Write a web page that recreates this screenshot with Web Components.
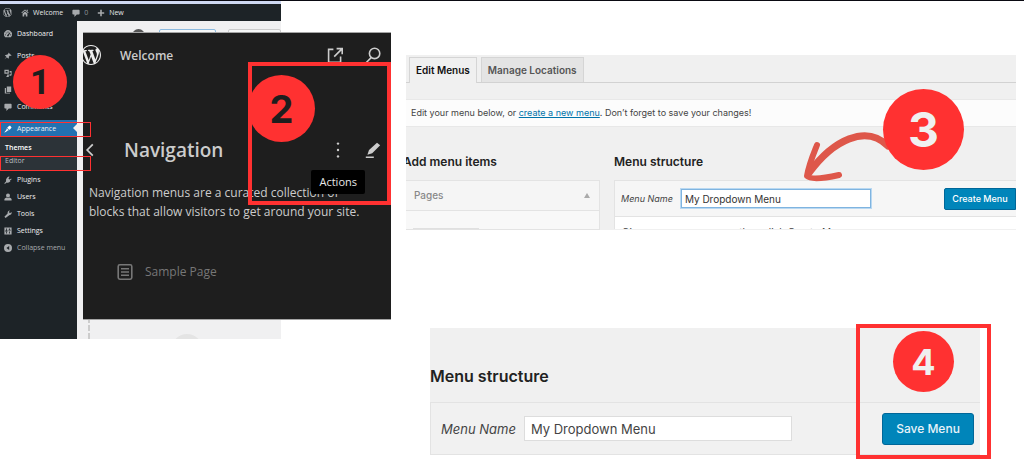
<!DOCTYPE html>
<html lang="en">
<head>
<meta charset="utf-8">
<title>Creating a dropdown menu</title>
<style>
  body { margin: 0; background: #fff; font-family: Inter, "Liberation Sans", sans-serif; }
</style>
</head>
<body>
<menu-guide></menu-guide>

<script>
const define = (name, html) => customElements.define(name, class extends HTMLElement {
  constructor() {
    super();
    const t = document.createElement('template');
    t.innerHTML = html;
    this.attachShadow({ mode: 'open' }).append(t.content.cloneNode(true));
  }
});

const ICONS = {
  wordpress: '<path d="M20 10c0-5.51-4.49-10-10-10C4.48 0 0 4.49 0 10c0 5.52 4.48 10 10 10 5.51 0 10-4.48 10-10zM7.78 15.37L4.37 6.22c.55-.02 1.17-.08 1.17-.08.5-.06.44-1.13-.06-1.11 0 0-1.45.11-2.37.11-.18 0-.37 0-.58-.01C4.12 2.69 6.87 1.11 10 1.11c2.33 0 4.45.87 6.05 2.34-.68-.11-1.65.39-1.65 1.58 0 .74.45 1.36.9 2.1.35.61.55 1.36.55 2.46 0 1.49-1.4 5-1.4 5l-3.03-8.37c.54-.02.82-.17.82-.17.5-.05.44-1.25-.06-1.22 0 0-1.44.12-2.38.12-.87 0-2.33-.12-2.33-.12-.5-.03-.56 1.2-.06 1.22l.92.08 1.26 3.41zM17.41 10c.24-.64.74-1.87.43-4.25.7 1.29 1.05 2.71 1.05 4.25 0 3.29-1.73 6.24-4.4 7.78.97-2.59 1.94-5.2 2.92-7.78zM6.1 18.09C3.12 16.65 1.11 13.53 1.11 10c0-1.3.23-2.48.72-3.59C3.25 10.3 4.67 14.2 6.1 18.09zm4.03-6.63l2.58 6.98c-.86.29-1.76.45-2.71.45-.79 0-1.57-.11-2.29-.33.81-2.38 1.62-4.74 2.42-7.1z"/>',
  home: '<path d="M10 1l9 8-1.500 1.500L10 4 2.500 10.500 1 9zM14 2h3v4l-3-2zM10 6l6 5v8h-4v-5H8v5H4v-8z"/>',
  comment: '<path d="M3 2h14q2 0 2 2v8q0 2-2 2h-5l-6 6v-6H3q-2 0-2-2V4q0-2 2-2z"/>',
  plus: '<path d="M8 2h4v6h6v4h-6v6H8v-6H2V8h6z"/>',
  dashboard: '<path fill-rule="evenodd" d="M3 18a10 10 0 1 1 14 0zM9 4h2v3H9zM4 7l2-1 1 2-2 1zM14 6l2 1-2 3-2 4a2 2 0 1 1-3-2zM2 11h3v2H2zM15 11h3v2h-3z"/>',
  pin: '<path d="M11 1l8 8-2 1-2-1-3 3q1 3-1 5l-4-4-6 6 5-7-4-4q3-2 6-1l3-3z"/>',
  media: '<path fill-rule="evenodd" d="M1 2h11v10H1zM4 5v4h5V5zM14 5h5v10a3 2 0 1 1-2-2V9h-3zM8 14h4v5a3 2 0 1 1-4-2z"/>',
  pages: '<path d="M7 1h11v14H7zM2 5h3v12h10v2H2z"/>',
  brush: '<path d="M11 4l4-3 4 5-4 5-2 1-5-5zM7 8l5 5-3 1-1 1-6 4-1-1 5-6z"/>',
  plug: '<path d="M12 1l2 1-3 4 3 3 4-3 1 2-4 3 1 2q-4 5-9 3l-5 4-1-2 4-4Q4 8 8 4z"/>',
  user: '<circle cx="10" cy="6" r="5"/><path d="M1 19v-4q2-4 6-4l3 2 3-2q4 0 6 4v4z"/>',
  wrench: '<path d="M15 1l-3 4 3 3 4-3q1 7-6 8l-9 7-3-3 8-8q-1-7 6-8z"/>',
  settings: '<path fill-rule="evenodd" d="M1 1h18v18H1zM5 4v5H3v2h6V9H7V4zM5 12v4h2v-4zM13 4v3h-2v2h6V7h-2V4zM13 11v5h2v-5z"/>',
  collapse: '<path fill-rule="evenodd" d="M10 0a10 10 0 1 0 0 20 10 10 0 0 0 0-20zM13 5v10l-7-5z"/>',
  external: '<path fill="none" stroke="currentColor" stroke-width="2" d="M8 3H2v16h15v-7M12 2h7v7M19 2L9 12"/>',
  search: '<g fill="none" stroke="currentColor" stroke-width="2"><circle cx="12" cy="8" r="6.500"/><path d="M8 13l-7 7"/></g>',
  back: '<path fill="none" stroke="currentColor" stroke-width="2.500" d="M14 2L6 10l8 8"/>',
  more: '<circle cx="10" cy="2" r="1.500"/><circle cx="10" cy="10" r="1.500"/><circle cx="10" cy="18" r="1.500"/>',
  edit: '<path d="M15 1l4 3L9 14l-6 2 2-6zM1 18h10v2H1z"/>',
  page: '<g fill="none" stroke="currentColor" stroke-width="2"><rect x="1.500" y="1" width="17" height="18" rx="2"/><path d="M5 6h10M5 10h10M5 14h10"/></g>'
};
customElements.define('ui-icon', class extends HTMLElement {
  connectedCallback() {
    if (this.shadowRoot) return;
    this.attachShadow({ mode: 'open' }).innerHTML =
      `<style>:host{display:block;flex:none;width:var(--icon-size,8px);height:var(--icon-size,8px)}
       svg{display:block;width:100%;height:100%;fill:currentColor}</style>
       <svg viewBox="0 0 20 20" aria-hidden="true">${ICONS[this.getAttribute('name')]}</svg>`;
  }
});

define('step-badge', `
<style>
  :host { display: grid; place-items: center; width: var(--badge-size); height: var(--badge-size);
    border-radius: 50%; background: #ff3131; color: #f0f0f0; font-weight: 700; line-height: 1; }
</style><slot></slot>`);

define('mark-frame', `
<style>:host { display: block; box-sizing: border-box; border: 4px solid #ff3131; pointer-events: none; }</style>`);

define('admin-bar', `
<style>
  :host { display: block; border-top: 3px solid #cfd9f3; background: #1d2327; color: #e4e6e7; font: 7px "Open Sans", sans-serif; }
  nav { display: flex; align-items: center; height: 17px; padding-left: 3px; }
  a { display: flex; align-items: center; gap: 4px; color: inherit; text-decoration: none; }
  a + a { margin-left: 9px; }
  .dim { color: #8d9499; }
  ui-icon { color: #a7aaad; }
</style>
<nav aria-label="Toolbar">
  <a href="#" aria-label="WordPress"><ui-icon name="wordpress" style="--icon-size:9px"></ui-icon></a>
  <a href="#"><ui-icon name="home"></ui-icon>Welcome</a>
  <a href="#" class="dim"><ui-icon name="comment"></ui-icon>0</a>
  <a href="#"><ui-icon name="plus"></ui-icon>New</a>
</nav>`);

define('side-item', `
<style>
  :host { display: block; color: #f0f0f1; }
  a { display: flex; align-items: center; gap: 5px; height: 17px; padding-left: 4px; color: inherit; text-decoration: none; white-space: nowrap; }
  ::slotted(ui-icon) { color: #a7aaad; }
  :host([current]) { background: #2271b1; position: relative; }
  :host([current]) ::slotted(ui-icon) { color: #fff; }
  :host([current])::after { content: ""; position: absolute; right: 0; top: 4px; border: 4px solid transparent; border-right-color: #f0f0f1; border-left: 0; }
  :host([dim]) { color: #a7aaad; }
</style>
<a href="#"><slot name="icon"></slot><slot></slot></a>`);

define('side-menu', `
<style>
  :host { display: block; box-sizing: border-box; width: 77px; background: #1d2327; padding-top: 4px; font: 7px "Open Sans", sans-serif; }
  .group { margin-bottom: 5px; }
  .sub { display: grid; align-content: center; gap: 4px; height: 34px; padding-left: 5px; background: #2c3338; }
  .sub a { color: #b9bdc0; text-decoration: none; line-height: 9px; }
  .sub a.on { color: #fff; font-weight: 600; }
</style>
<nav aria-label="Admin menu">
  <div class="group"><side-item><ui-icon slot="icon" name="dashboard"></ui-icon>Dashboard</side-item></div>
  <div class="group">
    <side-item><ui-icon slot="icon" name="pin"></ui-icon>Posts</side-item>
    <side-item><ui-icon slot="icon" name="media"></ui-icon>Media</side-item>
    <side-item><ui-icon slot="icon" name="pages"></ui-icon>Pages</side-item>
    <side-item><ui-icon slot="icon" name="comment"></ui-icon>Comments</side-item>
  </div>
  <side-item current><ui-icon slot="icon" name="brush"></ui-icon>Appearance</side-item>
  <div class="sub"><a href="#" class="on">Themes</a><a href="#">Editor</a></div>
  <side-item><ui-icon slot="icon" name="plug"></ui-icon>Plugins</side-item>
  <side-item><ui-icon slot="icon" name="user"></ui-icon>Users</side-item>
  <side-item><ui-icon slot="icon" name="wrench"></ui-icon>Tools</side-item>
  <side-item><ui-icon slot="icon" name="settings"></ui-icon>Settings</side-item>
  <side-item dim><ui-icon slot="icon" name="collapse"></ui-icon>Collapse menu</side-item>
</nav>`);

define('admin-window', `
<style>
  :host { display: block; width: 281px; }
  .cols { display: flex; height: 318px; background: #f0f0f1; }
  .canvas { flex: 1; display: flex; flex-direction: column; justify-content: space-between; overflow: hidden; padding-left: 11px; }
  .tools { display: flex; gap: 12px; padding: 8px 0 0 44px; }
  .tools i { box-sizing: border-box; width: 57px; height: 14px; border: 1px solid #8dbbe0; border-radius: 2px; background: #f6f7f7; }
  .tools i:first-child { width: 13px; height: 13px; border: 0; border-radius: 50%; background: #555; margin-right: 2px; }
  .tools i:last-child { border-color: #ccc; flex: 1; }
  .drop { height: 22px; border-left: 2px dashed #ccc; overflow: hidden; }
  .drop::before { content: ""; display: block; width: 32px; height: 32px; margin: 17px 0 0 81px; border-radius: 50%; background: #e4e4e4; }
</style>
<admin-bar></admin-bar>
<div class="cols"><side-menu></side-menu>
  <div class="canvas"><div class="tools"><i></i><i></i><i></i></div><div class="drop"></div></div>
</div>`);

define('nav-card', `
<style>
  :host { display: block; box-sizing: border-box; background: #1e1e1e; color: #ccc; border: solid #a5a5a5; border-width: 1px 0; overflow: hidden; font: 12px "Open Sans", sans-serif; --icon-size: 16px; }
  header, .title { display: flex; align-items: center; }
  header { height: 44px; padding-right: 10px; font-weight: 600; }
  .site { margin: 0 auto 0 19px; }
  button { display: block; padding: 0; border: 0; background: none; color: inherit; }
  header button + button { margin-left: 22px; }
  header > ui-icon { --icon-size: 20px; margin-left: -2px; color: #eee; }
  .title { height: 34px; margin-top: 56px; padding: 0 10px 0 0; }
  .title .back { --icon-size: 14px; }
  h2 { margin: 0 auto 0 27px; font-size: 19px; font-weight: 600; }
  .title button + button { margin-left: 19px; }
  p { margin: 16px 0 0 6px; line-height: 19px; white-space: nowrap; }
  .item { display: flex; align-items: center; gap: 12px; margin: 41px 0 0 34px; line-height: 20px; color: #777; text-decoration: none; }
</style>
<header><ui-icon name="wordpress"></ui-icon><span class="site">Welcome</span>
  <button aria-label="View site"><ui-icon name="external"></ui-icon></button>
  <button aria-label="Search"><ui-icon name="search"></ui-icon></button></header>
<div class="title"><button class="back" aria-label="Back"><ui-icon name="back"></ui-icon></button><h2>Navigation</h2>
  <button aria-label="Actions menu"><ui-icon name="more"></ui-icon></button>
  <button aria-label="Edit"><ui-icon name="edit"></ui-icon></button></div>
<p>Navigation menus are a curated collection of<br>blocks that allow visitors to get around your site.</p>
<a href="#" class="item"><ui-icon name="page"></ui-icon>Sample Page</a>`);

define('tool-tip', `
<style>:host { display: block; padding: 0 8px; border-radius: 2px; background: #000; color: #e8e8e8; font: 11px/24px "Open Sans", sans-serif; }</style><slot></slot>`);

define('site-editor-scene', `
<style>
  :host { display: block; position: relative; }
  nav-card, mark-frame, step-badge, tool-tip { position: absolute; }
  nav-card { left: 83px; right: 0; top: 31px; height: 288px; }
  .thin { left: 0; width: 91px; height: 15px; border-width: 1px; }
  .appearance { top: 121px; }
  .editor { top: 155px; }
  .actions { right: 0; top: 61px; width: 143px; height: 143px; }
  step-badge { color: #1e1e1e; }
  .one { left: 13px; top: 54px; --badge-size: 54px; font: 700 35px/1 Roboto, sans-serif; }
  .two { left: 248px; top: 74px; --badge-size: 67px; font-size: 38px; }
  tool-tip { right: 26px; top: 169px; }
</style>
<admin-window></admin-window>
<nav-card></nav-card>
<mark-frame class="thin appearance"></mark-frame>
<mark-frame class="thin editor"></mark-frame>
<mark-frame class="actions"></mark-frame>
<step-badge class="one">1</step-badge>
<step-badge class="two">2</step-badge>
<tool-tip>Actions</tool-tip>`);

define('menus-screen', `
<style>
  :host { display: block; position: relative; background: #f0f0f0; color: #444; font-size: 10px; overflow: hidden; }
  .tabs { display: flex; gap: 4px; padding: 2px 3px 0; border-bottom: 1px solid #d2d2d2; }
  .tabs a { padding: 0 6px; border: 1px solid #d5d5d5; border-bottom: 0; background: #e4e4e4; color: #555; font-weight: 600; line-height: 24px; text-decoration: none; }
  .tabs a.on { margin-bottom: -1px; padding-bottom: 1px; background: #f0f0f0; color: #111; }
  .notice { margin: 16px 0 0; padding-left: 5px; background: #fcfcfc; border: solid #e8e8e8; border-width: 1px 0; font-size: 9px; line-height: 26px; }
  .notice a { color: #0073aa; }
  .cols { display: grid; grid-template-columns: 194px 1fr; column-gap: 14px; }
  h2 { margin: 26px 0 10px; color: #222; font-size: 12px; font-weight: 600; line-height: 17px; }
  .add h2 { margin-left: -3px; }
  .box { border: 1px solid #e3e3e3; background: #f8f8f8; overflow: hidden; }
  .add .box { border-left: 0; }
  .pages { display: flex; align-items: center; justify-content: space-between; padding: 0 9px 0 8px; border-bottom: 1px solid #e3e3e3; color: #888; font-weight: 500; line-height: 29px; background: #f5f5f5; }
  .pages::after { content: ""; border: 3px solid transparent; border-bottom: 5px solid #aaa; border-top: 0; }
  .stub { width: 66px; height: 1px; margin: 17px 0 0 7px; background: #e0e0e0; }
  .structure .box { border-width: 1px 0 0 1px; }
  form { display: flex; align-items: center; height: 35px; padding-left: 6px; border-bottom: 1px solid #e3e3e3; background: #f6f6f6; }
  label { font-size: 9px; font-style: italic; margin-right: 8px; }
  input { box-sizing: border-box; width: 190px; height: 19px; padding: 0 3px; border: 1px solid #7fb4e0; outline: 1px solid #b9d8f1; background: #fff; color: #333; font: inherit; }
  button { margin-left: auto; width: 72px; height: 22px; padding: 0; border: 1px solid #006799; border-radius: 2px 0 0 2px; background: #0085ba; color: #fff; font: 500 9px Inter, sans-serif; }
  .hint { height: 12px; padding: 9px 7px 0; box-sizing: border-box; line-height: 12px; background: #fff; overflow: hidden; }
  step-badge { position: absolute; right: 52px; top: 34px; --badge-size: 81px; font-size: 48px; }
  .arrow { position: absolute; right: 121px; top: 75px; width: 95px; height: 55px; }
</style>
<nav class="tabs"><a href="#" class="on">Edit Menus</a><a href="#">Manage Locations</a></nav>
<p class="notice">Edit your menu below, or <a href="#">create a new menu</a>. Don’t forget to save your changes!</p>
<div class="cols">
  <section class="add"><h2>Add menu items</h2><div class="box"><div class="pages">Pages</div><div class="stub"></div></div></section>
  <section class="structure"><h2>Menu structure</h2><div class="box">
    <form><label for="name">Menu Name</label><input id="name" value="My Dropdown Menu"><button type="button">Create Menu</button></form>
    <div class="hint">Give your menu a name, then click Create Menu.</div>
  </div></section>
</div>
<svg class="arrow" viewBox="0 0 95 55" fill="none" stroke="#de574a" stroke-width="7" stroke-linecap="round" stroke-linejoin="round" aria-hidden="true"><path d="M88 16C66-6 33 10 9 43"/><path stroke-width="6" d="M17 15C13 25 9 34 7 46Q12 51 39 45"/></svg>
<step-badge>3</step-badge>`);

define('save-screen', `
<style>
  :host { display: block; position: relative; padding-top: 38px; background: #f0f0f0; color: #444; font-size: 13px; }
  h2 { margin: 0 0 15px; color: #222; font-size: 16px; font-weight: 600; line-height: 21px; }
  form { display: flex; align-items: center; height: 51px; padding: 0 6px 0 10px; border: solid #e3e3e3; border-width: 1px 0 1px 1px; background: #f1f1f1; }
  label { font-style: italic; margin-right: 8px; }
  input { box-sizing: border-box; width: 268px; height: 25px; padding: 0 6px; border: 1px solid #ddd; background: #fff; color: #444; font: 13px Inter, sans-serif; }
  button { margin-left: auto; width: 92px; height: 32px; padding: 0; border: 1px solid #006799; border-radius: 3px; background: #0085ba; color: #e8f3f9; font: 500 12px Inter, sans-serif; }
  mark-frame { position: absolute; right: -11px; top: -4px; width: 135px; height: 135px; }
  step-badge { position: absolute; right: 26px; top: 3px; --badge-size: 61px; font-size: 36px; }
</style>
<h2>Menu structure</h2>
<form><label for="name">Menu Name</label><input id="name" value="My Dropdown Menu"><button type="button">Save Menu</button></form>
<mark-frame></mark-frame>
<step-badge>4</step-badge>`);

define('menu-guide', `
<style>
  :host { display: grid; grid-template-columns: 391px 1fr; align-items: start; column-gap: 15px; box-sizing: border-box; min-height: 100vh; border-top: 1px solid #0a0a12; padding-right: 8px; }
  .right { display: grid; align-content: start; gap: 98px; padding-top: 54px; }
  save-screen { margin: 0 36px 0 24px; }
</style>
<site-editor-scene></site-editor-scene>
<div class="right"><menus-screen></menus-screen><save-screen></save-screen></div>`);
</script>
</body>
</html>
